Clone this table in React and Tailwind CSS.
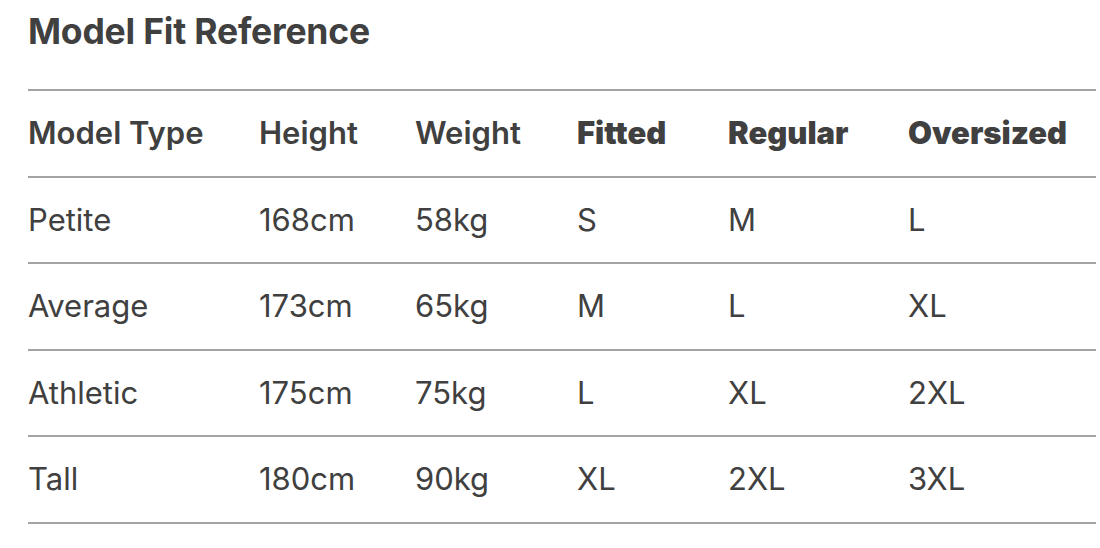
import React from "react";

const ROWS = [
  ["Petite", "168cm", "58kg", "S", "M", "L"],
  ["Average", "173cm", "65kg", "M", "L", "XL"],
  ["Athletic", "175cm", "75kg", "L", "XL", "2XL"],
  ["Tall", "180cm", "90kg", "XL", "2XL", "3XL"],
];

const COLS = ["w-[231px]", "w-[156px]", "w-[162px]", "w-[151px]", "w-[180px]", ""];

export default function App() {
  return (
    <div className="bg-white w-[1100px] h-[548px] overflow-hidden text-[#404040] font-['Inter',sans-serif]">
      <div className="pl-[28px] w-[1096px]">
        <h2 className="text-[35.5px] font-bold leading-none pt-[14px] pb-[39px] tracking-[-0.2px]">
          Model Fit Reference
        </h2>
        <table className="w-full border-collapse text-left text-[31px]">
          <thead>
            <tr className="border-y-2 border-[#a3a3a3] h-[87px]">
              <th className={`${COLS[0]} font-semibold p-0`}>Model Type</th>
              <th className={`${COLS[1]} font-semibold p-0`}>Height</th>
              <th className={`${COLS[2]} font-semibold p-0`}>Weight</th>
              <th className={`${COLS[3]} font-black p-0`}>Fitted</th>
              <th className={`${COLS[4]} font-black p-0`}>Regular</th>
              <th className="font-black p-0">Oversized</th>
            </tr>
          </thead>
          <tbody>
            {ROWS.map((row) => (
              <tr key={row[0]} className="border-b-2 border-[#a3a3a3] h-[86.5px]">
                {row.map((cell, i) => (
                  <td key={i} className={`${COLS[i]} p-0 font-normal`}>
                    {cell}
                  </td>
                ))}
              </tr>
            ))}
          </tbody>
        </table>
      </div>
    </div>
  );
}
